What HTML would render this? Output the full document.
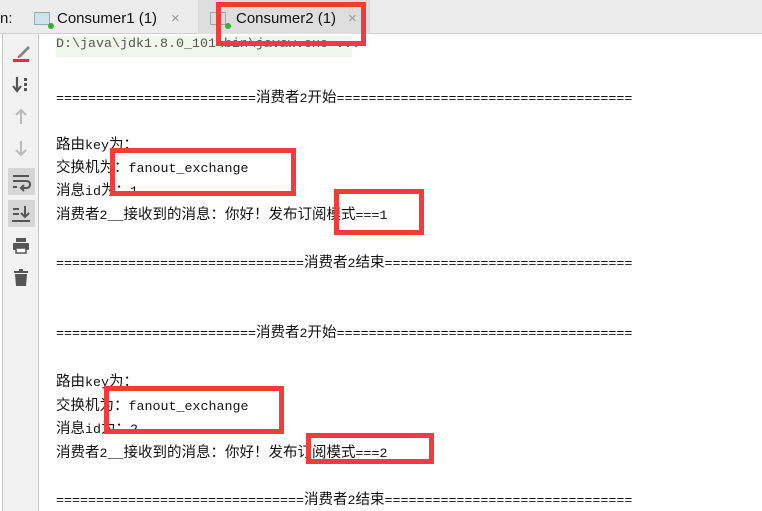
<!DOCTYPE html>
<html><head><meta charset="utf-8"><style>
*{margin:0;padding:0;box-sizing:border-box}
body{width:762px;height:511px;overflow:hidden;background:#fff;position:relative;font-family:"Liberation Sans","Noto Sans CJK SC",sans-serif}
.tabs{position:absolute;left:0;top:0;width:762px;height:34px;background:#ececec;border-bottom:1px solid #d0d0d0}
.tab{position:absolute;top:0;height:34px;font-size:15px;color:#111;line-height:38px}
.ico{position:absolute;top:12px;width:16px;height:13px;border:1px solid #9aa;background:#cfe3ee}
.dot{position:absolute;width:6px;height:6px;border-radius:50%;background:#35b035}
.x{position:absolute;top:0;color:#999;font-size:15px}
.gut{position:absolute;left:2px;top:34px;width:37px;height:477px;background:#f2f2f2;border-left:1px solid #c8c8c8;border-right:1px solid #c8c8c8}
.g{position:absolute;left:5px;width:27px;height:27px}
.g svg{position:absolute;left:0;top:0}
.con{position:absolute;left:56px;top:0;font-family:"Liberation Mono","Noto Sans CJK SC",monospace;font-size:13.33px;color:#111;white-space:pre}
.l{position:absolute;left:0;white-space:pre}
.c{font-family:"Noto Sans CJK SC",sans-serif;font-size:14.5px}
.r{position:absolute;border:5px solid #f23c3c}
</style></head><body>
<div class="tabs">
<div class="tab" style="left:0">n:</div>
<div class="tab" style="left:30px;width:165px"><div class="ico" style="left:4px"></div><div class="dot" style="left:18px;top:23px"></div><span style="position:absolute;left:27px">Consumer1 (1)</span><span class="x" style="left:141px">×</span></div>
<div class="tab" style="left:198px;width:172px;background:#dedede"><div class="ico" style="left:12px;background:#ddd"></div><div class="dot" style="left:27px;top:23px"></div><span style="position:absolute;left:38px">Consumer2 (1)</span><span class="x" style="left:150px">×</span></div>
</div>
<div class="gut">
<div class="g" style="top:5px"><svg width="27" height="27"><path d="M10 17 L20 7 L22 9 L13 18Z" fill="#888"/><path d="M10 17 L13 18 L10 19Z" fill="#d33"/><rect x="5" y="20" width="16" height="3" fill="#d33"/></svg></div>
<div class="g" style="top:37px"><svg width="27" height="27"><path d="M9 6 V19 M5 15 L9 20 L13 15" stroke="#555" stroke-width="2.2" fill="none"/><rect x="16" y="7" width="3" height="3" fill="#555"/><rect x="16" y="12" width="3" height="3" fill="#555"/><rect x="16" y="17" width="3" height="3" fill="#555"/></svg></div>
<div class="g" style="top:69px"><svg width="27" height="27"><path d="M13 21 V7 M8 12 L13 7 L18 12" stroke="#bbb" stroke-width="2" fill="none"/></svg></div>
<div class="g" style="top:101px"><svg width="27" height="27"><path d="M13 6 V20 M8 15 L13 20 L18 15" stroke="#bbb" stroke-width="2" fill="none"/></svg></div>
<div class="g" style="top:134px;background:#d6d6d6"><svg width="27" height="27"><path d="M5 8 H21 M5 13 H18 Q22 13 22 16.5 Q22 20 18 20 H14 M16 17 L13 20 L16 23 M5 19 H9" stroke="#555" stroke-width="2" fill="none"/></svg></div>
<div class="g" style="top:166px;background:#d6d6d6"><svg width="27" height="27"><path d="M5 9 H11 M5 14 H11 M4 21 H22 M17 6 V17 M13 13 L17 17 L21 13" stroke="#555" stroke-width="2" fill="none"/></svg></div>
<div class="g" style="top:198px"><svg width="27" height="27"><rect x="8" y="6" width="10" height="4" fill="#555"/><rect x="5" y="11" width="16" height="7" rx="1" fill="#555"/><rect x="8" y="16" width="10" height="5" fill="#fff" stroke="#555" stroke-width="1.5"/></svg></div>
<div class="g" style="top:230px"><svg width="27" height="27"><rect x="6" y="7" width="14" height="2" fill="#555"/><rect x="11" y="5" width="4" height="2" fill="#555"/><path d="M7 10 H19 L18 22 H8Z" fill="#555"/></svg></div>
</div>
<div style="position:absolute;left:56px;top:36px;width:296px;height:21px;background:#eef7ea"></div>
<div class="con">
<div class="l" style="top:37px;color:#555">D:\java\jdk1.8.0_101\bin\javaw.exe ...</div>
<div class="l" style="top:86px">=========================<span class="c">消费者</span>2<span class="c">开始</span>=====================================</div>
<div class="l" style="top:133px"><span class="c">路由</span>key<span class="c">为：</span></div>
<div class="l" style="top:156px"><span class="c">交换机为：</span>fanout_exchange</div>
<div class="l" style="top:179px"><span class="c">消息</span>id<span class="c">为：</span>1</div>
<div class="l" style="top:203px"><span class="c">消费者</span>2__<span class="c">接收到的消息：你好！发布订阅模式</span>===1</div>
<div class="l" style="top:251px">===============================<span class="c">消费者</span>2<span class="c">结束</span>===============================</div>
<div class="l" style="top:321px">=========================<span class="c">消费者</span>2<span class="c">开始</span>=====================================</div>
<div class="l" style="top:370px"><span class="c">路由</span>key<span class="c">为：</span></div>
<div class="l" style="top:394px"><span class="c">交换机为：</span>fanout_exchange</div>
<div class="l" style="top:417px"><span class="c">消息</span>id<span class="c">为：</span>2</div>
<div class="l" style="top:441px"><span class="c">消费者</span>2__<span class="c">接收到的消息：你好！发布订阅模式</span>===2</div>
<div class="l" style="top:488px">===============================<span class="c">消费者</span>2<span class="c">结束</span>===============================</div>
</div>
<div class="r" style="left:216px;top:2px;width:150px;height:44px"></div>
<div class="r" style="left:110px;top:148px;width:186px;height:48px"></div>
<div class="r" style="left:334px;top:189px;width:90px;height:46px"></div>
<div class="r" style="left:104px;top:386px;width:180px;height:48px"></div>
<div class="r" style="left:306px;top:433px;width:128px;height:31px"></div>
</body></html>
